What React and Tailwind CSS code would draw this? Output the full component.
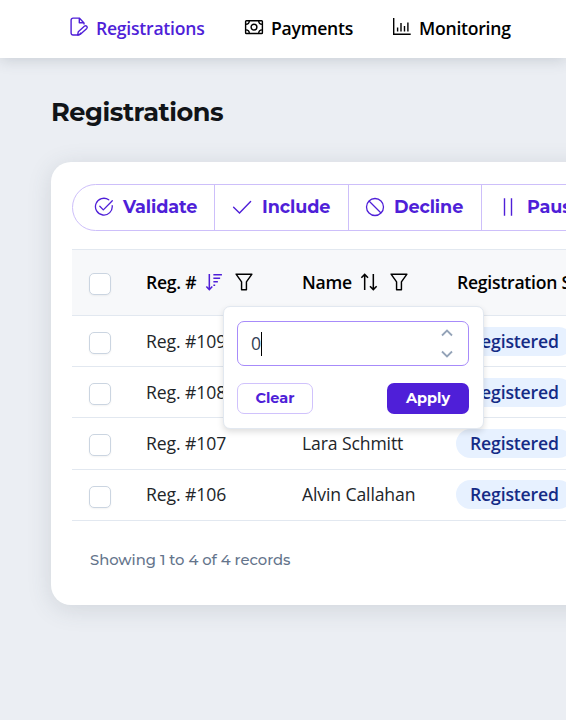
import React from 'react';

const sans = "font-['Open_Sans','Noto_Sans',sans-serif]";
const display = "font-['Montserrat','Inter',sans-serif]";

function Icon({ children, className = '', size = 20, w = 1.4 }) {
  return (
    <svg width={size} height={size} viewBox="0 0 20 20" fill="none" stroke="currentColor" strokeWidth={w} className={`shrink-0 ${className}`}>
      {children}
    </svg>
  );
}

const EditDoc = () => (
  <Icon className="mb-[2px]">
    <path d="M12.2 15.7 10.5 17.6a1 1 0 0 1-.8.4H4a1.9 1.9 0 0 1-1.9-1.9V3A1.9 1.9 0 0 1 4 1.1h6.300l4.700 4.800v1.600M10.300 1.300v4.500h4.500" strokeLinejoin="round" />
    <path d="m8.700 17.900.6-3.200 6.300-5.600a1.600 1.600 0 0 1 2.200 2.300l-6.100 5.700Z" strokeLinejoin="round" />
  </Icon>
);

const Money = () => (
  <Icon w={1.4}>
    <rect x="1.600" y="2.700" width="16.800" height="12.800" rx="0.800" />
    <circle cx="10" cy="9.100" r="2.900" />
    <path d="M1.800 6.300a3.500 3.500 0 0 0 3.500-3.300M14.700 3a3.500 3.500 0 0 0 3.500 3.300M1.800 11.900a3.500 3.500 0 0 1 3.500 3.400M14.700 15.300a3.500 3.500 0 0 1 3.500-3.400" />
  </Icon>
);

const Chart = () => (
  <Icon w={1.4} className="mb-[2px]">
    <path d="M1.700 1v16.300h17M5.600 14.500v-4M9 14.500V6M12.500 14.500V9M15.900 14.500V5.500" />
  </Icon>
);

const CheckCircle = () => (
  <Icon w={1.3} className="mb-px">
    <path d="M18.200 8.700a8.400 8.400 0 1 1-3.500-5.900" strokeLinecap="round" />
    <path d="m5.800 9.200 3.500 3.700 9-9.200" strokeLinecap="round" strokeLinejoin="round" />
  </Icon>
);
const Check = () => (
  <Icon w={1.4} className="mb-px"><path d="m1.600 10.300 5.900 5.800L18.600 4.400" strokeLinecap="round" /></Icon>
);
const Ban = () => (
  <Icon w={1.3} className="mb-px"><circle cx="10" cy="10" r="8.500" /><path d="m4 4 12 12" /></Icon>
);
const Pause = () => (
  <Icon w={1.4} className="mb-px"><path d="M6.500 1.300v17.400M13.500 1.300v17.400" /></Icon>
);

const Funnel = () => (
  <Icon size={18} w={1.6}>
    <path d="M1.200 1.300h17.600l-6.100 8.500v8.800H7.300V9.800Z" strokeLinejoin="round" />
  </Icon>
);
const SortDown = () => (
  <Icon size={18} w={1.7} className="text-[#4f1fd8]">
    <path d="M4.800 1v17.300M1.500 15l3.300 3.500L8.100 15M9.300 1.900h9.500M9.300 5.800h7.500M9.300 9.700h5M9.300 13.600h2" />
  </Icon>
);
const SortBoth = () => (
  <Icon size={18} w={1.7}>
    <path d="M5.200 19V1.500M1.500 5.200l3.700-3.700 3.700 3.700M14.800 1v17.500M11.100 14.800l3.700 3.700 3.700-3.700" />
  </Icon>
);

const Chevron = ({ up }) => (
  <svg width="12" height="8" viewBox="0 0 12 8" fill="none" stroke="#94a3b8" strokeWidth="1.8">
    <path d={up ? 'M1 6.500 6 1.500l5 5' : 'm1 1.500 5 5 5-5'} />
  </svg>
);

const Checkbox = () => (
  <span className="block h-[22px] w-[22px] shrink-0 rounded-[5px] border border-[#cbd5e1] bg-white shadow-[0_1px_2px_rgba(18,18,23,0.05)]" />
);

const rows = [
  ['Reg. #109', 'Mila Novak'],
  ['Reg. #108', 'Owen Baker'],
  ['Reg. #107', 'Lara Schmitt'],
  ['Reg. #106', 'Alvin Callahan'],
];

function FilterPopup() {
  return (
    <div className="absolute top-[57px] left-[151px] z-10 h-[123px] w-[261px] rounded-[7px] border border-[#e2e8f0] bg-white px-[13px] pt-[14px] shadow-[0_3px_6px_rgba(0,0,0,0.13)]">
      <div className="flex h-[45px] w-[232px] items-center rounded-[7px] border border-[#a78bfa] pr-[15px] pl-[13px] text-[17.6px] text-[#334155]">
        <span>0</span>
        <span className="h-6 w-px bg-black" />
        <span className="ml-auto flex flex-col gap-[13px]"><Chevron up /><Chevron /></span>
      </div>
      <div className={`mt-[17px] flex w-[232px] justify-between text-[14.5px] font-bold ${display}`}>
        <button className="h-[31px] w-[76px] rounded-[7px] border border-[#d0c2fc] text-[#4f1fd8]">Clear</button>
        <button className="h-[31px] w-[82px] rounded-[7px] bg-[#4f1fd8] text-white">Apply</button>
      </div>
    </div>
  );
}

export default function App() {
  return (
    <div className={`h-[720px] w-full overflow-hidden bg-[#ebeef3] text-[17.6px] whitespace-nowrap text-[#212529] ${sans}`}>
      <header className="relative flex h-[58px] items-center bg-white pl-[69px] font-semibold tracking-[-0.25px] text-black shadow-[0_2px_14px_rgba(60,75,90,0.2)]">
        <a className="flex w-[175px] items-center gap-[7px] pb-[2px] text-[#4f1fd8]"><EditDoc /><span>Registrations</span></a>
        <a className="flex w-[148px] items-center gap-[7px] pb-[2px]"><Money /><span>Payments</span></a>
        <a className="flex items-center gap-[7px] pb-[2px]"><Chart /><span>Monitoring</span></a>
      </header>
      <main className="pt-[36px] pl-[51px]">
        <h1 className={`h-[36px] text-[25.6px] leading-[36px] font-bold tracking-[-0.45px] text-[#111418] ${display}`}>Registrations</h1>
        <section className="mt-[32px] h-[443px] w-[700px] rounded-[20px] bg-white pt-[22px] pl-[21px] shadow-[0_4px_24px_rgba(60,75,90,0.15)]">
          <div className={`flex h-[47px] w-[650px] rounded-l-full border border-[#cdbffa] text-[17.6px] font-bold tracking-[-0.1px] text-[#4f1fd8] ${display}`}>
            <div className="flex w-[142px] items-center gap-[9px] border-r border-[#cdbffa] pl-[21px]"><CheckCircle /><span>Validate</span></div>
            <div className="flex w-[134px] items-center gap-[10px] border-r border-[#cdbffa] pl-[17px]"><Check /><span>Include</span></div>
            <div className="flex w-[133px] items-center gap-[9px] border-r border-[#cdbffa] pl-[16px]"><Ban /><span>Decline</span></div>
            <div className="flex items-center gap-[9px] pl-[16px]"><Pause /><span>Pause</span></div>
          </div>
          <div className="relative mt-[18px] w-[650px]">
            <div className="flex h-[67px] items-center border-y border-[#e2e8f0] bg-[#f7f8fa] pl-[17px] font-semibold tracking-[-0.25px] text-black">
              <div className="w-[57px] pt-[3px]"><Checkbox /></div>
              <div className="flex w-[156px] items-center"><span className="w-[59px]">Reg. #</span><SortDown /><span className="ml-[12px]"><Funnel /></span></div>
              <div className="flex w-[155px] items-center"><span className="w-[58px]">Name</span><SortBoth /><span className="ml-[12px]"><Funnel /></span></div>
              <div>Registration Status</div>
            </div>
            {rows.map(([reg, name]) => (
              <div key={reg} className="flex h-[51.2px] items-center border-b border-[#e2e8f0] pl-[17px]">
                <div className="w-[57px] pt-[4px]"><Checkbox /></div>
                <div className="w-[156px] tracking-[-0.1px]">{reg}</div>
                <div className="w-[154px] tracking-[-0.12px]">{name}</div>
                <div className="flex h-[29px] items-center rounded-full bg-[#e7f1ff] px-[14px] font-semibold tracking-[-0.16px] text-[#152b86]">Registered</div>
              </div>
            ))}
            <FilterPopup />
          </div>
          <p className={`mt-[27px] pl-[18px] text-[14.8px] leading-6 font-medium tracking-[-0.03px] text-[#64748b] ${display}`}>Showing 1 to 4 of 4 records</p>
        </section>
      </main>
    </div>
  );
}
